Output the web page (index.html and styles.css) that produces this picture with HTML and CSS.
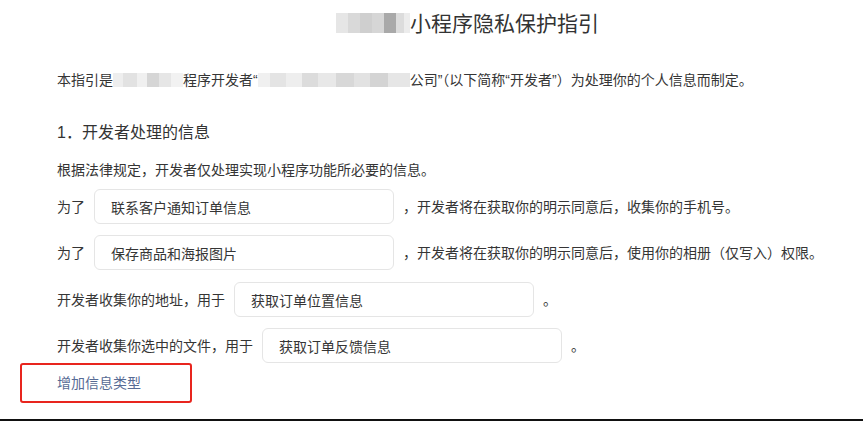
FILE: index.html
```html
<!DOCTYPE html>
<html lang="zh-CN">

<head>
    <meta charset="UTF-8">
    <meta name="viewport" content="width=device-width, initial-scale=1.0">
    <title>小程序隐私保护指引</title>
    <link rel="stylesheet" href="styles.css">
</head>

<body>
    <h1 class="title"><span class="blur blur-title"></span>小程序隐私保护指引</h1>

    <div class="content">
        <p class="intro">本指引是<span class="blur blur-name"></span>程序开发者“<span class="blur blur-company"></span>公司”（以下简称“开发者”）为处理你的个人信息而制定。</p>

        <h2 class="section">1．开发者处理的信息</h2>
        <p class="desc">根据法律规定，开发者仅处理实现小程序功能所必要的信息。</p>

        <!-- info rows -->
        <div class="row">
            <span>为了</span>
            <input class="field" type="text" value="联系客户通知订单信息">
            <span>，开发者将在获取你的明示同意后，收集你的手机号。</span>
        </div>
        <div class="row">
            <span>为了</span>
            <input class="field" type="text" value="保存商品和海报图片">
            <span>，开发者将在获取你的明示同意后，使用你的相册（仅写入）权限。</span>
        </div>
        <div class="row row-gap">
            <span>开发者收集你的地址，用于</span>
            <input class="field" type="text" value="获取订单位置信息">
            <span>。</span>
        </div>
        <div class="row">
            <span>开发者收集你选中的文件，用于</span>
            <input class="field" type="text" value="获取订单反馈信息">
            <span>。</span>
        </div>

        <!-- red box is the annotation around the link -->
        <div class="add-box">
            <a class="add-link" href="#">增加信息类型</a>
        </div>
    </div>

    <div class="bottom-bar"></div>
</body>

</html>
```

FILE: styles.css
```css
html,
body {
    margin: 0;
    overflow: hidden;
}

body {
    font-family: "Liberation Sans", "Noto Sans CJK SC", sans-serif;
    font-size: 14px;
    color: #353535;
    background: #fff;
}

.title {
    margin: 0;
    padding-left: 72px;
    text-align: center;
    font-size: 21px;
    font-weight: normal;
    line-height: 48px;
    color: #333;
}

/* mosaic over hidden names */
.blur {
    display: inline-block;
    vertical-align: middle;
}

.blur-title {
    width: 74px;
    height: 20px;
    margin-top: -4px;
    background: linear-gradient(90deg, #e6e6e6 0 12px, #d9d9d9 12px 24px, #cfcfcf 24px 36px, #d6d6d6 36px 48px, #a9a9a9 48px 60px, #dcdcdc 60px 68px, #ececec 68px);
}

.blur-name {
    width: 70px;
    height: 14px;
    margin-top: -3px;
    background: linear-gradient(90deg, #eeeeee 0 10px, #e2e2e2 10px 24px, #f0f0f0 24px 34px, #d6d6d6 34px 46px, #e6e6e6 46px 58px, #f2f2f2 58px);
}

.blur-company {
    width: 152px;
    height: 14px;
    margin-top: -3px;
    background: linear-gradient(90deg, #f0f0f0 0 12px, #e4e4e4 12px 28px, #eeeeee 28px 44px, #dcdcdc 44px 60px, #e8e8e8 60px 78px, #d8d8d8 78px 96px, #e2e2e2 96px 112px, #d4d4d4 112px 130px, #e6e6e6 130px);
}

.content {
    padding-left: 57px;
}

.intro {
    margin: 20px 0 0;
    line-height: 24px;
}

.section {
    margin: 29px 0 0;
    font-size: 16px;
    font-weight: normal;
    line-height: 24px;
    color: #333;
}

.desc {
    margin: 13px 0 0;
    line-height: 24px;
}

.row {
    display: flex;
    align-items: center;
    gap: 9px;
    margin-top: 11px;
    line-height: 24px;
}

.row:first-of-type {
    margin-top: 7px;
}

.row-gap {
    margin-top: 12px;
}

.field {
    box-sizing: border-box;
    width: 300px;
    height: 35px;
    padding: 0 16px;
    border: 1px solid #e5e5e5;
    border-radius: 6px;
    font-family: inherit;
    font-size: 14px;
    color: #353535;
    background: #fff;
    outline: none;
}

.add-box {
    box-sizing: border-box;
    width: 172px;
    height: 40px;
    margin-left: -37px;
    padding: 6px 0 6px 35px;
    border: 2px solid #e8251e;
    border-radius: 3px;
    line-height: 24px;
}

.add-link {
    color: #576b95;
    text-decoration: none;
}

.bottom-bar {
    height: 3px;
    margin-top: 16px;
    background: #111;
}
```
